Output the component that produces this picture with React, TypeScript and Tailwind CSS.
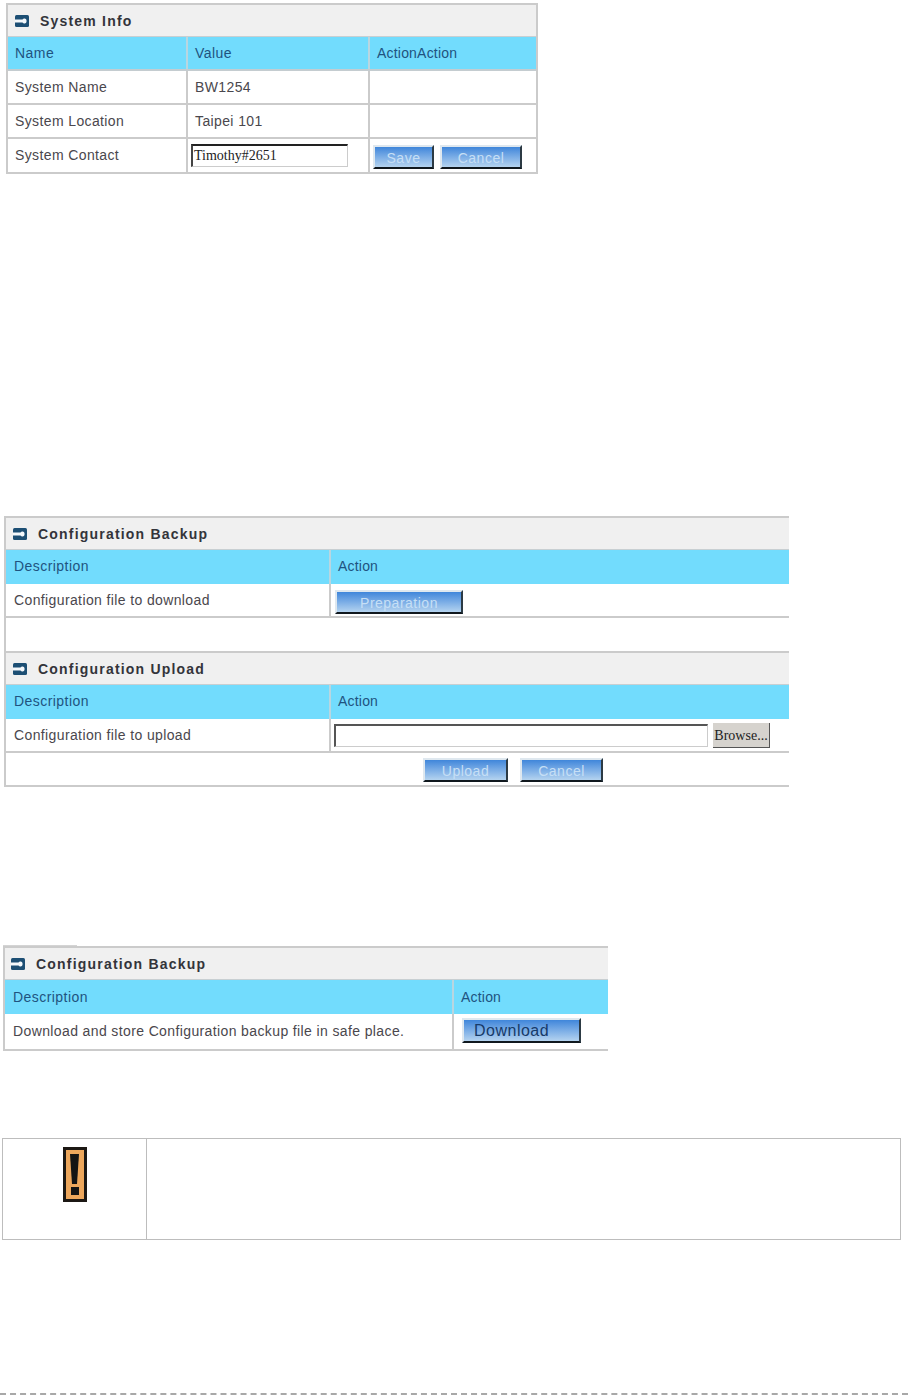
import React from "react";

const font = { fontFamily: '"Liberation Sans", Arial, sans-serif' };

function KeyIcon() {
  return (
    <svg width="14" height="12" viewBox="0 0 14 12" className="shrink-0">
      <rect x="0" y="0" width="14" height="12" rx="1.5" fill="#1d4f74" />
      <path d="M0 4.5h7.5a2.2 2.2 0 0 1 4 0.6v1.8a2.2 2.2 0 0 1-4 0.6H0z" fill="#f4f8fb" />
    </svg>
  );
}

function Title({ text, className = "" }: { text: string; className?: string }) {
  return (
    <div className={`h-[32px] shrink-0 bg-[#f0f0f0] flex items-center pt-[1px] border-b border-[#c8cfd2] ${className}`}>
      <KeyIcon />
      <span className="ml-[11px] text-[14px] font-bold tracking-[1.2px] text-[#33343a]">{text}</span>
    </div>
  );
}

function Btn({ label, className = "", dark = false }: { label: string; className?: string; dark?: boolean }) {
  return (
    <button
      className={`h-[24px] flex items-center bg-gradient-to-b from-[#3f86da] to-[#b4d3ef] border-t-2 border-l-2 border-t-[#dfe8ef] border-l-[#dfe8ef] border-r-2 border-b-2 border-r-[#2c3a44] border-b-[#10181e] ${dark ? "justify-start pl-[10px] text-[#173a68] text-[16px] tracking-[0.5px]" : "justify-center pt-[3px] text-[#c6dff5] text-[14px] tracking-[0.5px]"} ${className}`}
    >
      {label}
    </button>
  );
}

function Cell({ children, className = "" }: { children?: React.ReactNode; className?: string }) {
  return <div className={`flex items-center min-w-0 ${className}`}>{children}</div>;
}

function App() {
  const body = "text-[14px] tracking-[0.38px] text-[#4a474d]";
  const head = "text-[14px] tracking-[0.45px] text-[#1f5380]";
  return (
    <div className="w-[908px] h-[1397px] bg-white overflow-hidden flex flex-col" style={font}>
      {/* System Info */}
      <section className="mt-[3px] ml-[6px] w-[532px] h-[171px] border-2 border-[#cbcbcb] flex flex-col">
        <Title text="System Info" className="pl-[7px]" />
        <div className={`grid grid-cols-[180px_182px_1fr] h-[34px] bg-[#72dcfd] border-b-2 border-[#c4ccd0] ${head}`}>
          <Cell className="pl-[7px] pt-[1px] border-r-2 border-[#b9d6e0]">Name</Cell>
          <Cell className="pl-[7px] pt-[1px] border-r-2 border-[#b9d6e0]">Value</Cell>
          <Cell className="pl-[7px] pt-[1px] tracking-[0.2px]">ActionAction</Cell>
        </div>
        <div className={`grid grid-cols-[180px_182px_1fr] h-[34px] border-b-2 border-[#cbcbcb] ${body}`}>
          <Cell className="pl-[7px] border-r-2 border-[#cbcbcb]">System Name</Cell>
          <Cell className="pl-[7px] border-r-2 border-[#cbcbcb]">BW1254</Cell>
          <Cell />
        </div>
        <div className={`grid grid-cols-[180px_182px_1fr] h-[34px] border-b-2 border-[#cbcbcb] ${body}`}>
          <Cell className="pl-[7px] border-r-2 border-[#cbcbcb]">System Location</Cell>
          <Cell className="pl-[7px] border-r-2 border-[#cbcbcb]">Taipei 101</Cell>
          <Cell />
        </div>
        <div className={`grid grid-cols-[180px_182px_1fr] flex-1 ${body}`}>
          <Cell className="pl-[7px] border-r-2 border-[#cbcbcb]">System Contact</Cell>
          <Cell className="pl-[3px] border-r-2 border-[#cbcbcb]">
            <div
              className="w-[157px] h-[23px] border-2 border-r border-b border-t-[#222] border-l-[#444] border-r-[#ccc] border-b-[#ccc] flex items-center pl-[1px] pb-[1px] text-[14px] tracking-normal text-[#222]"
              style={{ fontFamily: '"Liberation Serif", serif' }}
            >
              Timothy#2651
            </div>
          </Cell>
          <Cell className="pl-[3px] gap-[6px] pt-[3px]">
            <Btn label="Save" className="w-[61px]" />
            <Btn label="Cancel" className="w-[82px]" />
          </Cell>
        </div>
      </section>

      {/* Configuration Backup + Upload */}
      <section className="mt-[342px] ml-[4px] w-[785px] h-[271px] border-t-2 border-l-2 border-b-2 border-[#cbcbcb] flex flex-col">
        <Title text="Configuration Backup" className="pl-[7px]" />
        <div className={`grid grid-cols-[325px_1fr] h-[34px] bg-[#72dcfd] ${head}`}>
          <Cell className="pl-[8px] pb-[2px] border-r-2 border-[#b9d6e0]">Description</Cell>
          <Cell className="pl-[7px] pb-[2px] tracking-[0.2px]">Action</Cell>
        </div>
        <div className={`grid grid-cols-[325px_1fr] h-[34px] border-b-2 border-[#cbcbcb] ${body}`}>
          <Cell className="pl-[8px] border-r-2 border-[#cbcbcb]">Configuration file to download</Cell>
          <Cell className="pl-[4px] pt-[4px]">
            <Btn label="Preparation" className="w-[128px]" />
          </Cell>
        </div>
        <div className="h-[33px] shrink-0" />
        <div className="border-t-2 border-[#cbcbcb]">
          <Title text="Configuration Upload" className="pl-[7px]" />
        </div>
        <div className={`grid grid-cols-[325px_1fr] h-[34px] bg-[#72dcfd] ${head}`}>
          <Cell className="pl-[8px] pb-[2px] border-r-2 border-[#b9d6e0]">Description</Cell>
          <Cell className="pl-[7px] pb-[2px] tracking-[0.2px]">Action</Cell>
        </div>
        <div className={`grid grid-cols-[325px_1fr] h-[34px] border-b-2 border-[#cbcbcb] ${body}`}>
          <Cell className="pl-[8px] border-r-2 border-[#cbcbcb]">Configuration file to upload</Cell>
          <Cell className="pl-[3px] gap-[5px] pt-[1px]">
            <div className="w-[374px] h-[23px] border-t-2 border-l-2 border-r border-b border-t-[#555] border-l-[#555] border-r-[#ccc] border-b-[#ccc]" />
            <div
              className="w-[57px] h-[25px] bg-[#d6d3ce] border-r border-b border-r-[#555] border-b-[#555] flex items-center justify-center text-[14px] tracking-normal text-[#222]"
              style={{ fontFamily: '"Liberation Serif", serif' }}
            >
              Browse...
            </div>
          </Cell>
        </div>
        <div className="flex-1 flex items-center pt-[1px] pl-[417px] gap-[12px]">
          <Btn label="Upload" className="w-[85px]" />
          <Btn label="Cancel" className="w-[83px]" />
        </div>
      </section>

      {/* Configuration Backup download */}
      <div className="mt-[158px] ml-[3px] w-[74px] h-[2px] bg-[#d4d4d4]" />
      <section className="-mt-[1px] ml-[3px] w-[605px] h-[105px] border-t-2 border-l-2 border-b-2 border-[#cbcbcb] flex flex-col">
        <Title text="Configuration Backup" className="pl-[6px]" />
        <div className={`grid grid-cols-[449px_1fr] h-[34px] bg-[#72dcfd] ${head}`}>
          <Cell className="pl-[8px] border-r-2 border-[#b9d6e0]">Description</Cell>
          <Cell className="pl-[7px] tracking-[0.2px]">Action</Cell>
        </div>
        <div className={`grid grid-cols-[449px_1fr] flex-1 ${body}`}>
          <Cell className="pl-[8px] border-r-2 border-[#cbcbcb]">Download and store Configuration backup file in safe place.</Cell>
          <Cell className="pl-[8px] pb-[2px]">
            <Btn label="Download" className="w-[119px] h-[25px]" dark />
          </Cell>
        </div>
      </section>

      {/* Notice */}
      <section className="mt-[87px] ml-[2px] w-[899px] h-[102px] border border-[#bdbdbd] grid grid-cols-[144px_1fr]">
        <div className="border-r border-[#bdbdbd] flex justify-center pt-[8px]">
          <svg width="24" height="55" viewBox="0 0 24 55" className="block">
            <rect x="1.5" y="1.5" width="21" height="52" fill="#eda75c" stroke="#1c1814" strokeWidth="3" />
            <polygon points="7,7 16,7 14,37 9,37" fill="#141414" />
            <rect x="8" y="40" width="8" height="8" fill="#141414" />
          </svg>
        </div>
        <div />
      </section>

      {/* Footer rule */}
      <div className="mt-[153px] w-full border-t-2 border-dashed border-[#a8a8a8]" />
    </div>
  );
}

export default App;
